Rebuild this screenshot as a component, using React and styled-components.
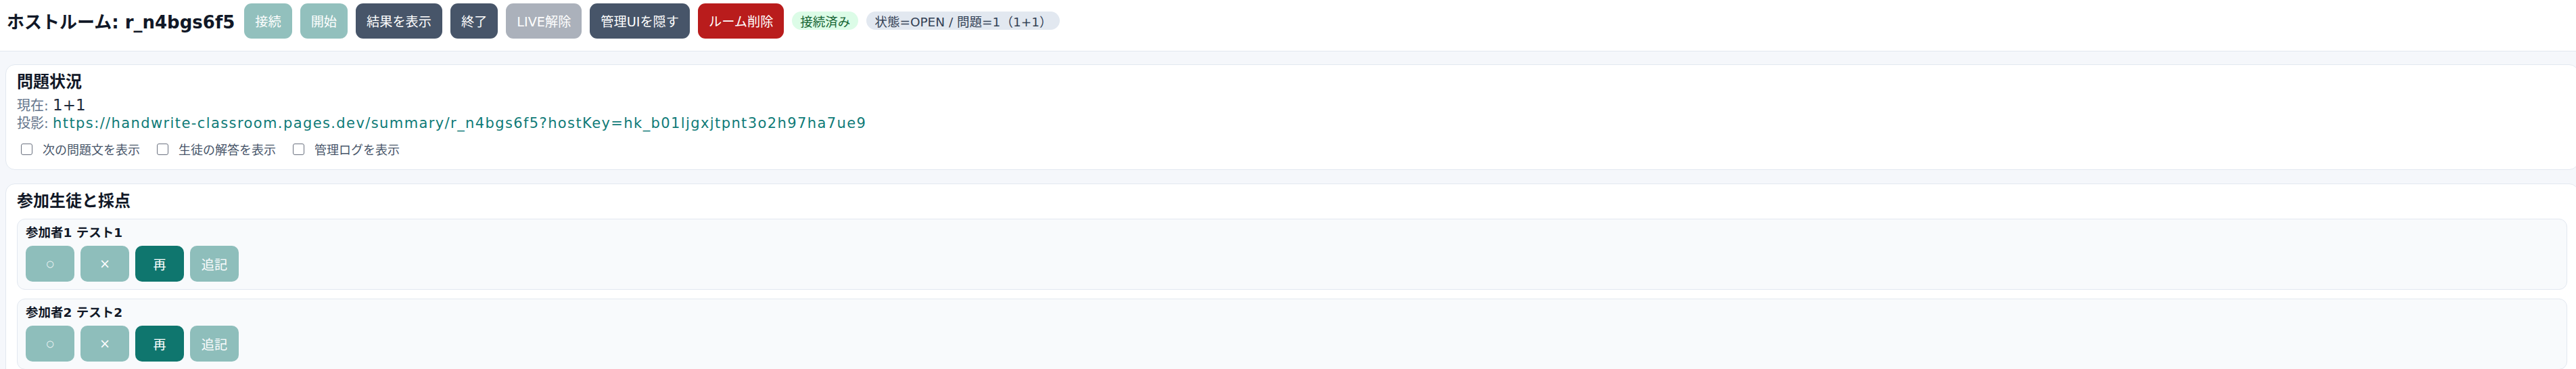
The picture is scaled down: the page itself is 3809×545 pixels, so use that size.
import React from "react";
import styled, { createGlobalStyle, css } from "styled-components";

const GlobalStyle = createGlobalStyle`
  html, body {
    margin: 0;
    padding: 0;
    background: #f5f7fb;
    overflow: hidden;
  }
  body {
    font-family: "DejaVu Sans", "Noto Sans CJK JP", sans-serif;
    color: #1e293b;
  }
  * {
    box-sizing: border-box;
  }
`;

const TopBar = styled.header`
  display: flex;
  align-items: center;
  gap: 12px;
  height: 76px;
  padding: 0 10px 14px;
  background: #ffffff;
  border-bottom: 1px solid #e2e8f0;
`;

const RoomTitle = styled.h1`
  margin: 0 2px 0 0;
  font-size: 26px;
  font-weight: 700;
  color: #111827;
  white-space: nowrap;
`;

const variants = {
  teal: "#0f766e",
  slate: "#475569",
  danger: "#b91c1c",
};

const ActionButton = styled.button`
  height: 52px;
  padding: 0 16px;
  border: none;
  border-radius: 11px;
  background: ${(p) => variants[p.$variant]};
  color: #ffffff;
  font-family: inherit;
  font-size: 19.2px;
  white-space: nowrap;
  cursor: pointer;
  ${(p) =>
    p.disabled &&
    css`
      opacity: 0.45;
      cursor: default;
    `}
`;

const Pill = styled.span`
  display: inline-flex;
  align-items: center;
  height: 27px;
  padding: 0 12px;
  border-radius: 999px;
  font-size: 18.5px;
  white-space: nowrap;
  background: ${(p) => (p.$tone === "ok" ? "#dcfce7" : "#e2e8f0")};
  color: ${(p) => (p.$tone === "ok" ? "#166534" : "#334155")};
`;

const Main = styled.main`
  display: flex;
  flex-direction: column;
  gap: 20px;
  padding: 19px 0 0 8px;
  margin-right: -4px;
`;

const Card = styled.section`
  background: #ffffff;
  border: 1px solid #e2e8f0;
  border-radius: 14px;
  padding: 10px 16px 17px;
`;

const CardTitle = styled.h2`
  margin: 0;
  font-size: 24px;
  line-height: 30px;
  font-weight: 700;
  color: #111827;
`;

const InfoLine = styled.div`
  font-size: 20px;
  line-height: 26px;
  color: #64748b;
  margin-top: ${(p) => p.$top || 0}px;
  white-space: nowrap;
`;

const Value = styled.span`
  font-size: 23px;
  color: #1e293b;
`;

const ProjectLink = styled.a`
  color: #0f7b78;
  text-decoration: none;
  font-size: 21px;
  letter-spacing: 1.4px;
`;

const OptionRow = styled.div`
  display: flex;
  align-items: center;
  gap: 25px;
  margin-top: 12px;
  height: 26px;
  padding-left: 6px;
`;

const Option = styled.label`
  display: inline-flex;
  align-items: center;
  gap: 15px;
  font-size: 18px;
  color: #475569;
  white-space: nowrap;
`;

const Checkbox = styled.input.attrs({ type: "checkbox" })`
  appearance: none;
  width: 17px;
  height: 17px;
  margin: 0;
  border: 1.5px solid #6b7280;
  border-radius: 3px;
  background: #ffffff;
`;

const ParticipantList = styled.div`
  display: flex;
  flex-direction: column;
  gap: 13px;
  margin-top: 11px;
`;

const ParticipantCard = styled.div`
  background: #f8fafc;
  border: 1px solid #e2e8f0;
  border-radius: 12px;
  padding: 8px 12px 11px;
`;

const ParticipantName = styled.div`
  font-size: 18.5px;
  line-height: 24px;
  font-weight: 600;
  color: #111827;
`;

const ScoreRow = styled.div`
  display: flex;
  gap: 9px;
  margin-top: 7px;
`;

const ScoreButton = styled.button`
  min-width: 72px;
  height: 53px;
  padding: 0 14px;
  border: none;
  border-radius: 10px;
  background: #0f766e;
  color: #ffffff;
  font-family: inherit;
  font-size: ${(p) => p.$size || 19.2}px;
  cursor: pointer;
  ${(p) =>
    p.disabled &&
    css`
      opacity: 0.45;
      cursor: default;
    `}
`;

const participants = [
  { id: 1, name: "参加者1 テスト1" },
  { id: 2, name: "参加者2 テスト2" },
];

const url =
  "https://handwrite-classroom.pages.dev/summary/r_n4bgs6f5?hostKey=hk_b01ljgxjtpnt3o2h97ha7ue9";

export default function App() {
  return (
    <>
      <GlobalStyle />
      <TopBar>
        <RoomTitle>ホストルーム: r_n4bgs6f5</RoomTitle>
        <ActionButton $variant="teal" disabled>
          接続
        </ActionButton>
        <ActionButton $variant="teal" disabled>
          開始
        </ActionButton>
        <ActionButton $variant="slate">結果を表示</ActionButton>
        <ActionButton $variant="slate">終了</ActionButton>
        <ActionButton $variant="slate" disabled>
          LIVE解除
        </ActionButton>
        <ActionButton $variant="slate">管理UIを隠す</ActionButton>
        <ActionButton $variant="danger">ルーム削除</ActionButton>
        <Pill $tone="ok">接続済み</Pill>
        <Pill>状態=OPEN / 問題=1（1+1）</Pill>
      </TopBar>

      <Main>
        <Card>
          <CardTitle>問題状況</CardTitle>
          <InfoLine $top={6}>
            現在: <Value>1+1</Value>
          </InfoLine>
          <InfoLine>
            投影: <ProjectLink href={url}>{url}</ProjectLink>
          </InfoLine>
          <OptionRow>
            <Option>
              <Checkbox />
              次の問題文を表示
            </Option>
            <Option>
              <Checkbox />
              生徒の解答を表示
            </Option>
            <Option>
              <Checkbox />
              管理ログを表示
            </Option>
          </OptionRow>
        </Card>

        <Card>
          <CardTitle>参加生徒と採点</CardTitle>
          <ParticipantList>
            {participants.map((p) => (
              <ParticipantCard key={p.id}>
                <ParticipantName>{p.name}</ParticipantName>
                <ScoreRow>
                  <ScoreButton disabled $size={13}>
                    ○
                  </ScoreButton>
                  <ScoreButton disabled>×</ScoreButton>
                  <ScoreButton>再</ScoreButton>
                  <ScoreButton disabled>追記</ScoreButton>
                </ScoreRow>
              </ParticipantCard>
            ))}
          </ParticipantList>
        </Card>
      </Main>
    </>
  );
}
